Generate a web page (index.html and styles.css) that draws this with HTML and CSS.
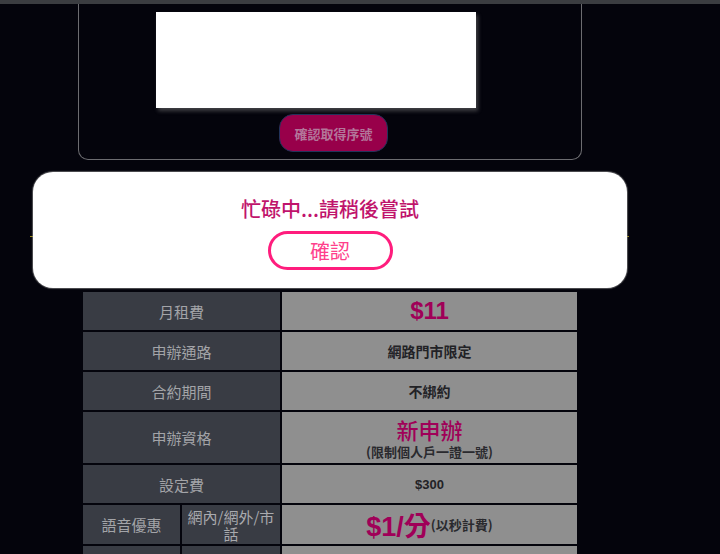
FILE: index.html
```html
<!DOCTYPE html>
<html lang="zh-Hant">
<head>
<meta charset="utf-8">
<link rel="stylesheet" href="styles.css">
</head>
<body>
<div class="topbar"></div>
<div class="wrap">
  <div class="card">
    <div class="captcha"></div>
    <button class="get-btn">確認取得序號</button>
  </div>
  <div class="spacer"></div>
  <div class="table">
    <div class="lab span2">月租費</div>
    <div class="val"><span class="hl big">$11</span></div>

    <div class="lab span2">申辦通路</div>
    <div class="val">網路門市限定</div>

    <div class="lab span2">合約期間</div>
    <div class="val">不綁約</div>

    <div class="lab span2">申辦資格</div>
    <div class="val stack"><span class="hl mid">新申辦</span><span class="note tight">(限制個人戶一證一號)</span></div>

    <div class="lab span2">設定費</div>
    <div class="val small">$300</div>

    <div class="lab">語音優惠</div>
    <div class="lab sub">網內/網外/市話</div>
    <div class="val"><span class="hl big2">$1/分</span><span class="note">(以秒計費)</span></div>

    <div class="lab"></div>
    <div class="lab"></div>
    <div class="val"></div>
  </div>
</div>
<div class="hline"></div>
<div class="modal">
  <p class="msg">忙碌中...請稍後嘗試</p>
  <button class="ok">確認</button>
</div>
</body>
</html>
```
FILE: styles.css
```css
html, body {
  margin: 0;
  padding: 0;
  background: #04040c;
  height: 554px;
  overflow: hidden;
  font-family: "Noto Sans CJK TC", "Liberation Sans", sans-serif;
}
.topbar {
  height: 4px;
  background: #3b3d41;
}
.wrap {
  margin-left: 78px;
  width: 504px;
}
.card {
  border: 1px solid #6c6c70;
  border-top: none;
  border-radius: 0 0 10px 10px;
  padding: 8px 0 7px 0;
  display: flex;
  flex-direction: column;
}
.captcha {
  margin-left: 77px;
  width: 320px;
  height: 96px;
  background: #ffffff;
  box-shadow: 2px 3px 4px rgba(140, 140, 140, 0.45);
}
.get-btn {
  margin-top: 6px;
  margin-left: 200px;
  width: 109px;
  height: 38px;
  background: #98004a;
  border: 1px solid #22335a;
  border-radius: 14px;
  color: #b3769a;
  font-family: "Noto Sans CJK TC", sans-serif;
  font-size: 13px;
  font-weight: 700;
  padding: 0;
}
.spacer {
  height: 132px;
}
.table {
  margin-left: 5px;
  display: grid;
  grid-template-columns: 97px 98px 295px;
  grid-template-rows: 38px 38px 38px 51px 38px 39px 8px;
  gap: 2px;
}
.lab {
  background: #393c44;
  color: #a3a4a8;
  font-size: 15px;
  display: flex;
  align-items: center;
  justify-content: center;
  text-align: center;
}
.span2 {
  grid-column: span 2;
}
.val {
  background: #8f8f8f;
  color: #222226;
  font-size: 14px;
  font-weight: 700;
  display: flex;
  align-items: center;
  justify-content: center;
}
.stack {
  flex-direction: column;
}
.sub {
  line-height: 17px;
  padding: 0 1px;
  word-break: break-all;
  color: #a9aaae;
}
.hl {
  color: #a00058;
}
.big {
  font-family: "Liberation Sans", sans-serif;
  font-size: 24px;
  font-weight: 700;
}
.mid {
  font-size: 22px;
  font-weight: 500;
  line-height: 28px;
}
.note {
  font-size: 13px;
  font-weight: 700;
  color: #2a2a2e;
}
.tight {
  line-height: 18px;
}
.big2 {
  font-family: "Liberation Sans", "Noto Sans CJK TC", sans-serif;
  font-size: 27px;
  font-weight: 700;
}
.small {
  font-family: "Liberation Sans", sans-serif;
  font-size: 13px;
}
.hline {
  position: absolute;
  left: 30px;
  top: 236px;
  width: 599px;
  height: 1px;
  background: #9c8a16;
}
.modal {
  position: absolute;
  left: 33px;
  top: 172px;
  width: 594px;
  height: 116px;
  box-sizing: border-box;
  background: #ffffff;
  border-radius: 20px;
  box-shadow: 0 0 1px 1px rgba(160, 160, 160, 0.5);
  display: flex;
  flex-direction: column;
  align-items: center;
  padding-top: 24px;
}
.msg {
  margin: 0;
  font-size: 20px;
  line-height: 26px;
  font-weight: 500;
  color: #c0146c;
}
.ok {
  margin-top: 9px;
  width: 125px;
  height: 39px;
  border: 3px solid #ff1d7d;
  border-radius: 20px;
  background: #ffffff;
  color: #ff3f8c;
  font-family: "Noto Sans CJK TC", sans-serif;
  font-size: 20px;
  padding: 0;
}
```
